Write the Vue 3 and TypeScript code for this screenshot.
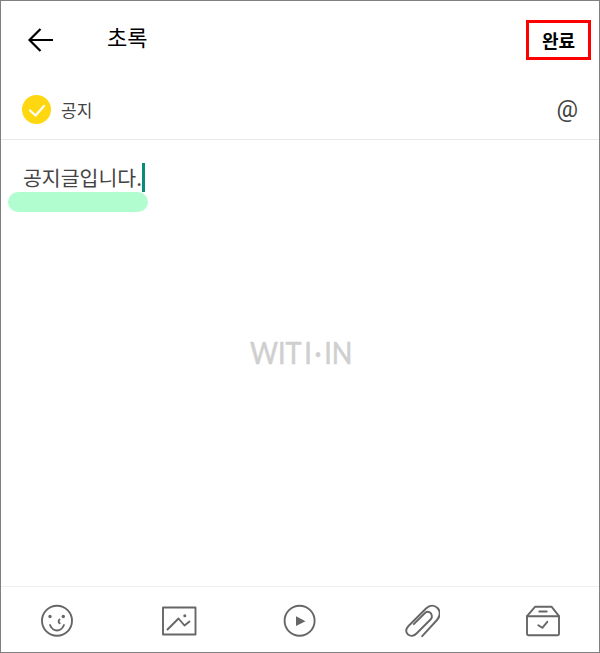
<template>
  <div class="screen">
    <header class="header">
      <button class="back" aria-label="뒤로">
        <svg width="28" height="28" viewBox="0 0 28 28" fill="none" stroke="#000" stroke-width="2.2">
          <path d="M26 14H3M13.5 3 2.5 14l11 11" />
        </svg>
      </button>
      <h1 class="title">초록</h1>
      <button class="done">완료</button>
    </header>

    <div class="notice-row">
      <span class="check">
        <svg width="18" height="18" viewBox="0 0 18 18" fill="none" stroke="#fff" stroke-width="2.200" stroke-linecap="round" stroke-linejoin="round">
          <path d="M2 9.500l5.500 5 8.500-9.500" />
        </svg>
      </span>
      <span class="notice-label">공지</span>
      <span class="at">@</span>
    </div>

    <main class="body">
      <div class="editor">
        <span class="typed">공지글입니다.</span><span class="caret"></span>
      </div>
      <div class="highlight"></div>
      <div class="watermark">WIT<span class="split">I</span><span class="split dot">·</span><span class="split">I</span>N</div>
    </main>

    <footer class="toolbar">
      <button v-for="tool in tools" :key="tool.name" class="tool" :aria-label="tool.name">
        <svg width="36" height="36" viewBox="0 0 36 36" fill="none" stroke="#666" stroke-width="1.900" stroke-linecap="round" stroke-linejoin="round">
          <path v-for="(d, i) in tool.lines" :key="i" :d="d" />
          <path v-for="(d, i) in tool.fills" :key="'f' + i" :d="d" fill="#666" stroke="none" />
        </svg>
      </button>
    </footer>
  </div>
</template>

<script setup lang="ts">
interface Tool {
  name: string;
  lines: string[];
  fills: string[];
}

const tools: Tool[] = [
  {
    name: "이모티콘",
    lines: [
      "M18 3.700a15 15 0 1 0 0 30 15 15 0 0 0 0-30Z",
      "M11 23c1.500 3.500 4 5.500 7 5.500s5.500-2 7-5.500",
      "M20.500 17.500c-1.200.8-1.200 3 .2 3.800",
    ],
    fills: ["M9.300 14.500a1.700 1.700 0 1 0 3.400 0 1.700 1.700 0 0 0-3.400 0Z", "M22.600 14.500a1.700 1.700 0 1 0 3.400 0 1.700 1.700 0 0 0-3.400 0Z"],
  },
  {
    name: "사진",
    lines: [
      "M2 5.500h32.500v27H2Z",
      "M6.500 27.500l11-11 6 7 5-4",
    ],
    fills: ["M22.300 13.800a1.500 1.500 0 1 0 3 0 1.500 1.500 0 0 0-3 0Z"],
  },
  {
    name: "동영상",
    lines: ["M17.600 3.700a15 15 0 1 0 0 30 15 15 0 0 0 0-30Z"],
    fills: ["M14 14.300 23.500 19.200 14 24.100Z"],
  },
  {
    name: "파일",
    lines: [
      "M18.200 34.200 33 18c3.500-4 3.500-9 .5-12-3-3-7.500-3.500-11.500.5L4.500 24c-3 3-3 6.500-.5 8.500 2.500 2 6 1.500 8.500-1L27 17c1.500-2 1-5-1-6.500-1.500-1-3.500-.8-5 .5L9.800 22.200",
    ],
    fills: [],
  },
  {
    name: "보관함",
    lines: [
      "M2 14.200h32V32a1.200 1.200 0 0 1-1.200 1.200H3.200A1.200 1.200 0 0 1 2 32Z",
      "M2 14.200 10 4.800h16.700l7.300 9.400",
      "M14.300 9.500h7.400",
      "M13.300 23.200l4 2.600 5-6",
    ],
    fills: [],
  },
];
</script>

<style>
html,
body {
  margin: 0;
  background: #fff;
}
</style>

<style scoped>
.screen {
  width: 600px;
  height: 653px;
  box-sizing: border-box;
  border: 1px solid #808080;
  display: flex;
  flex-direction: column;
  background: #fff;
  font-family: "Noto Sans CJK KR", "Liberation Sans", sans-serif;
  color: #333;
}

button {
  border: 0;
  background: none;
  padding: 0;
  margin: 0;
  font-family: inherit;
}

.header {
  height: 79px;
  display: flex;
  align-items: center;
  padding: 0 8px 0 26px;
}

.back {
  width: 28px;
  height: 28px;
  display: block;
  margin-top: -2px;
}

.title {
  margin: -9px 0 0 52px;
  font-size: 22px;
  font-weight: 400;
  line-height: 30px;
  color: #000;
}

.done {
  margin: -2px 0 0 auto;
  width: 65px;
  height: 40px;
  box-sizing: border-box;
  border: 3px solid #f00;
  font-size: 18px;
  font-weight: 700;
  color: #000;
}

.notice-row {
  height: 60px;
  box-sizing: border-box;
  border-bottom: 1px solid #e8e8e8;
  display: flex;
  align-items: center;
  padding: 0 21px 0 21px;
}

.check {
  width: 29px;
  height: 29px;
  border-radius: 50%;
  background: #ffd711;
  display: flex;
  align-items: center;
  justify-content: center;
}

.notice-label {
  margin-left: 10px;
  font-size: 17px;
  color: #444;
}

.at {
  margin-left: auto;
  margin-top: -2px;
  font-family: "Roboto", sans-serif;
  font-weight: 400;
  font-size: 24px;
  color: #444;
}

.body {
  flex: 1;
  position: relative;
  display: flex;
  flex-direction: column;
  padding: 23px 0 0 7px;
}

.editor {
  display: flex;
  align-items: center;
  height: 29px;
  padding-left: 15px;
  font-size: 20.500px;
  color: #444;
}

.typed {
  white-space: nowrap;
  margin-top: -2px;
}

.caret {
  width: 3px;
  height: 29px;
  background: #0b8a78;
}

.highlight {
  width: 140px;
  height: 20px;
  border-radius: 10px;
  background: #b2fdd0;
}

.watermark {
  margin: 123px 0 0 242px;
  font-family: "Lato", sans-serif;
  font-weight: 400;
  font-size: 30px;
  line-height: 34px;
  color: #cfcfcf;
  -webkit-text-stroke: 0.6px #cfcfcf;
  white-space: nowrap;
  transform: scaleX(0.9);
  transform-origin: left center;
}

.split {
  margin-left: 3px;
}

.dot {
  margin: 0 0 0 3px;
}

.toolbar {
  height: 66px;
  box-sizing: border-box;
  border-top: 1px solid #eee;
  display: flex;
  align-items: center;
  justify-content: space-between;
  padding: 0 38px;
}

.tool {
  width: 36px;
  height: 36px;
  display: block;
}
</style>
